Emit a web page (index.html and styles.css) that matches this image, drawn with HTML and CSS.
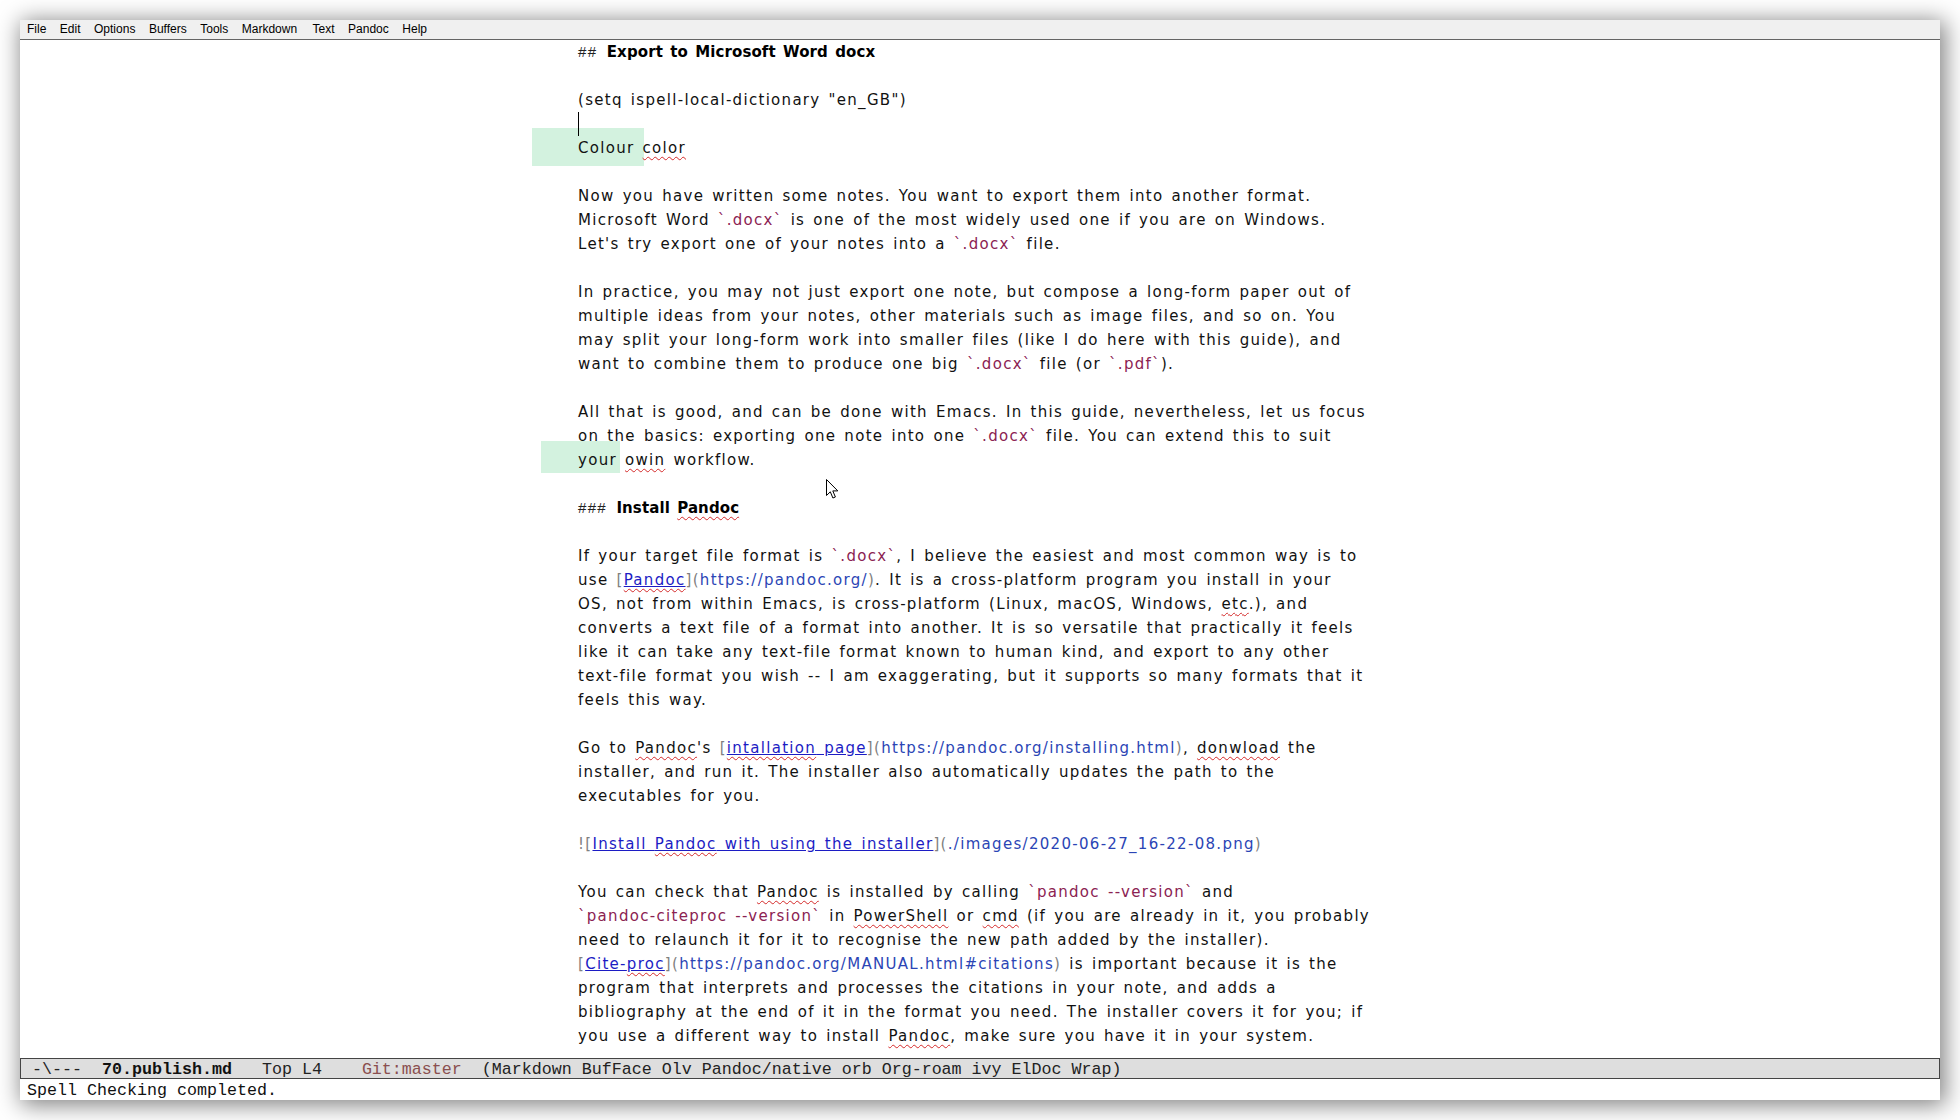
FILE: index.html
```html
<!DOCTYPE html>
<html>
<head>
<meta charset="utf-8">
<title>Emacs - 70.publish.md</title>
<link rel="stylesheet" href="styles.css">
</head>
<body>
<div class="win">
  <div class="menubar">
    <span>File</span><span>Edit</span><span>Options</span><span>Buffers</span><span>Tools</span><span>Markdown</span><span class="wide">Text</span><span>Pandoc</span><span>Help</span>
  </div>
  <div class="editor">
    <div class="text">
      <div class="ln"><span class="hm">## </span><span class="h">Export to Microsoft Word docx</span></div>
      <div class="ln"></div>
      <div class="ln">(setq ispell-local-dictionary "en_GB")</div>
      <div class="ln"><span class="cursor"></span></div>
      <div class="ln"><span class="flash f1"></span>Colour <span class="sp">color</span></div>
      <div class="ln"></div>
      <div class="ln">Now you have written some notes. You want to export them into another format.</div>
      <div class="ln">Microsoft Word <span class="code">`.docx`</span> is one of the most widely used one if you are on Windows.</div>
      <div class="ln">Let's try export one of your notes into a <span class="code">`.docx`</span> file.</div>
      <div class="ln"></div>
      <div class="ln">In practice, you may not just export one note, but compose a long-form paper out of</div>
      <div class="ln">multiple ideas from your notes, other materials such as image files, and so on. You</div>
      <div class="ln">may split your long-form work into smaller files (like I do here with this guide), and</div>
      <div class="ln">want to combine them to produce one big <span class="code">`.docx`</span> file (or <span class="code">`.pdf`</span>).</div>
      <div class="ln"></div>
      <div class="ln">All that is good, and can be done with Emacs. In this guide, nevertheless, let us focus</div>
      <div class="ln">on the basics: exporting one note into one <span class="code">`.docx`</span> file. You can extend this to suit</div>
      <div class="ln"><span class="flash f2"></span>your <span class="sp">owin</span> workflow.</div>
      <div class="ln"></div>
      <div class="ln"><span class="hm">### </span><span class="h">Install <span class="sp">Pandoc</span></span></div>
      <div class="ln"></div>
      <div class="ln">If your target file format is <span class="code">`.docx`</span>, I believe the easiest and most common way is to</div>
      <div class="ln">use <span class="mk">[</span><span class="lnk"><span class="sp">Pandoc</span></span><span class="mk">](</span><span class="url">https://pandoc.org/</span><span class="mk">)</span>. It is a cross-platform program you install in your</div>
      <div class="ln">OS, not from within Emacs, is cross-platform (Linux, macOS, Windows, <span class="sp">etc</span>.), and</div>
      <div class="ln">converts a text file of a format into another. It is so versatile that practically it feels</div>
      <div class="ln">like it can take any text-file format known to human kind, and export to any other</div>
      <div class="ln">text-file format you wish -- I am exaggerating, but it supports so many formats that it</div>
      <div class="ln">feels this way.</div>
      <div class="ln"></div>
      <div class="ln">Go to <span class="sp">Pandoc</span>'s <span class="mk">[</span><span class="lnk"><span class="sp">intallation</span> page</span><span class="mk">](</span><span class="url">https://pandoc.org/installing.html</span><span class="mk">)</span>, <span class="sp">donwload</span> the</div>
      <div class="ln">installer, and run it. The installer also automatically updates the path to the</div>
      <div class="ln">executables for you.</div>
      <div class="ln"></div>
      <div class="ln"><span class="mk">![</span><span class="lnk">Install <span class="sp">Pandoc</span> with using the installer</span><span class="mk">](</span><span class="url">./images/2020-06-27_16-22-08.png</span><span class="mk">)</span></div>
      <div class="ln"></div>
      <div class="ln">You can check that <span class="sp">Pandoc</span> is installed by calling <span class="code">`pandoc --version`</span> and</div>
      <div class="ln"><span class="code">`pandoc-citeproc --version`</span> in <span class="sp">PowerShell</span> or <span class="sp">cmd</span> (if you are already in it, you probably</div>
      <div class="ln">need to relaunch it for it to recognise the new path added by the installer).</div>
      <div class="ln"><span class="mk">[</span><span class="lnk">Cite-<span class="sp">proc</span></span><span class="mk">](</span><span class="url">https://pandoc.org/MANUAL.html#citations</span><span class="mk">)</span> is important because it is the</div>
      <div class="ln">program that interprets and processes the citations in your note, and adds a</div>
      <div class="ln">bibliography at the end of it in the format you need. The installer covers it for you; if</div>
      <div class="ln">you use a different way to install <span class="sp">Pandoc</span>, make sure you have it in your system.</div>
    </div>
    <svg class="pointer" width="13" height="21" viewBox="0 0 13 21"><path d="M0.5 0.5 L0.5 16.5 L4.3 12.8 L6.9 19 L9.4 18 L6.8 11.9 L11.8 11.9 Z" fill="#fff" stroke="#000" stroke-width="1" stroke-linejoin="miter"/></svg>
  </div>
  <div class="modeline"><span> -\---  </span><b>70.publish.md</b><span>   Top L4    </span><span class="git">Git:master</span><span>  (Markdown BufFace Olv Pandoc/native orb Org-roam ivy ElDoc Wrap)</span></div>
  <div class="echo">Spell Checking completed.</div>
</div>
</body>
</html>
```
FILE: styles.css
```css
html, body {
  margin: 0;
  padding: 0;
  background: #ffffff;
}
body {
  width: 1960px;
  height: 1120px;
  overflow: hidden;
}
.win {
  position: relative;
  z-index: 0;
  margin: 20px;
  width: 1920px;
  height: 1080px;
  background: #ffffff;
  box-shadow: 3px 3px 22px 2px rgba(0, 0, 0, 0.5);
  display: flex;
  flex-direction: column;
}
.menubar {
  height: 17px;
  padding-bottom: 2px;
  background: #f0f0f0;
  border-bottom: 1px solid #646464;
  display: flex;
  align-items: center;
  gap: 13.5px;
  padding-left: 7px;
  font-family: "Liberation Sans", Arial, sans-serif;
  font-size: 12px;
  color: #000;
}
.menubar .wide {
  margin-left: 2px;
}
.editor {
  position: relative;
  flex: 1;
  overflow: hidden;
}
.text {
  margin-left: 558px;
  font-family: "DejaVu Sans", sans-serif;
  font-size: 15px;
  letter-spacing: 1.3px;
  word-spacing: 2px;
  line-height: 24px;
  color: #111;
}
.ln {
  position: relative;
  height: 24px;
  white-space: pre;
}
.h {
  font-weight: bold;
  color: #000;
  letter-spacing: 0.1px;
}
.hm {
  color: #222;
  font-family: "Liberation Sans", Arial, sans-serif;
  letter-spacing: 1.3px;
  word-spacing: 4px;
}
.mk {
  color: #7f7f7f;
}
.code {
  color: #8b2252;
}
.lnk {
  color: #1c1cc4;
  text-decoration: underline;
  text-decoration-color: #1c1cc4;
}
.url {
  color: #2b45b5;
}
.sp {
  text-decoration: underline wavy #d42a2a;
  text-decoration-thickness: 1px;
  text-underline-offset: 3px;
}
.cursor {
  display: inline-block;
  width: 1px;
  height: 24px;
  background: #000;
  vertical-align: top;
}
.flash {
  position: absolute;
  z-index: -1;
  background: #d3f2df;
}
.f1 {
  left: -46px;
  top: -8px;
  width: 112px;
  height: 38px;
}
.f2 {
  left: -37px;
  top: -7px;
  width: 79px;
  height: 32px;
}
.pointer {
  position: absolute;
  left: 806px;
  top: 439px;
}
.modeline {
  height: 19px;
  border: 1px solid #444;
  background: #dedede;
  font-family: "Liberation Mono", monospace;
  font-size: 16.67px;
  line-height: 21px;
  white-space: pre;
  color: #222;
  padding-left: 1px;
  overflow: hidden;
}
.modeline b {
  font-weight: bold;
  color: #111;
}
.git {
  color: #8a4f4f;
}
.echo {
  height: 21px;
  font-family: "Liberation Mono", monospace;
  font-size: 16.67px;
  line-height: 23px;
  white-space: pre;
  color: #111;
  padding-left: 7px;
  overflow: hidden;
}
```
